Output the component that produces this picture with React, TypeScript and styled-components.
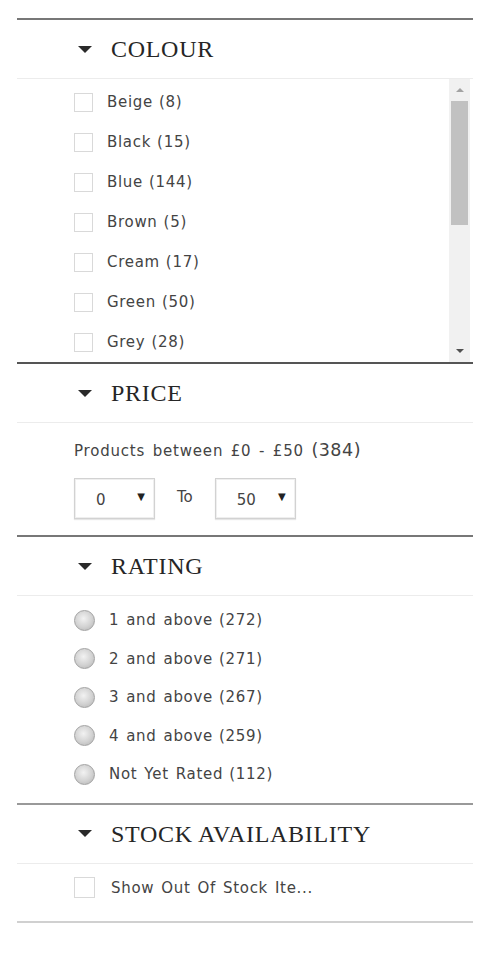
import { createGlobalStyle } from 'styled-components'
import styled from 'styled-components'

const GlobalStyle = createGlobalStyle`
  body {
    margin: 0;
    background: #fff;
    font-family: "DejaVu Sans", "Liberation Sans", sans-serif;
  }
`

const Panel = styled.div({
  width: '456px',
  margin: '18px 0 0 17px',
  borderBottom: '2px solid #d0d0d0'
})

type SectionProps = { $line?: string }
const Section = styled.section<SectionProps>(({ $line }) => ({
  borderTop: `2px solid ${$line ?? '#6a6a6a'}`
}))

const Header = styled.div({
  height: '58px',
  display: 'flex',
  alignItems: 'center',
  paddingLeft: '61px',
  borderBottom: '1px solid #ececec',
  gap: '19px'
})

const Caret = styled.span({
  width: 0,
  height: 0,
  borderLeft: '7px solid transparent',
  borderRight: '7px solid transparent',
  borderTop: '7px solid #2a2a2a'
})

const HeaderTitle = styled.h2({
  margin: 0,
  fontFamily: '"Liberation Serif", "Times New Roman", serif',
  fontWeight: 'normal',
  fontSize: '24px',
  letterSpacing: '0.7px',
  color: '#262626',
  lineHeight: '28px'
})

// --- colour list with its scrollbar

const ScrollBox = styled.div({
  height: '283px',
  display: 'flex'
})

const ListViewport = styled.div({
  flex: 1,
  overflow: 'hidden',
  paddingTop: '3px'
})

const ScrollTrack = styled.div({
  width: '21px',
  marginRight: '3px',
  background: '#f1f1f1',
  display: 'flex',
  flexDirection: 'column',
  alignItems: 'center'
})

const ScrollButton = styled.div({
  height: '22px',
  display: 'flex',
  alignItems: 'center',
  justifyContent: 'center'
})

type ArrowProps = { $up?: boolean }
const ScrollArrow = styled.span<ArrowProps>(({ $up }) => ({
  width: 0,
  height: 0,
  borderLeft: '4px solid transparent',
  borderRight: '4px solid transparent',
  borderBottom: $up ? '4px solid #a3a3a3' : 'none',
  borderTop: $up ? 'none' : '4px solid #505050'
}))

const ScrollThumb = styled.div({
  width: '17px',
  height: '124px',
  background: '#c1c1c1'
})

const ScrollRest = styled.div({
  flex: 1
})

type RowProps = { $gap?: number, $height?: number }
const OptionRow = styled.label<RowProps>(({ $gap, $height }) => ({
  display: 'flex',
  alignItems: 'center',
  gap: `${$gap ?? 14}px`,
  height: `${$height ?? 40}px`,
  paddingLeft: '57px',
  fontSize: '15px',
  letterSpacing: '0.7px',
  wordSpacing: '1.5px',
  color: '#444',
  whiteSpace: 'nowrap'
}))

type BoxProps = { $size?: number }
const CheckBox = styled.span<BoxProps>(({ $size }) => ({
  width: `${$size ?? 19}px`,
  height: `${$size ?? 19}px`,
  boxSizing: 'border-box',
  border: '1px solid #d9d9d9',
  background: '#fff',
  flexShrink: 0
}))

const Count = styled.span({
  marginLeft: '6px'
})

// --- price

const PriceBody = styled.div({
  padding: '17px 0 16px 57px'
})

const PriceText = styled.div({
  fontSize: '15px',
  letterSpacing: '0.8px',
  wordSpacing: '2px',
  color: '#444',
  lineHeight: '20px'
})

const PriceTotal = styled.span({
  fontSize: '17.5px',
  letterSpacing: '0.5px'
})

const PriceRow = styled.div({
  display: 'flex',
  alignItems: 'center',
  gap: '22px',
  marginTop: '17px'
})

const FakeSelect = styled.div({
  width: '81px',
  height: '41px',
  boxSizing: 'border-box',
  border: '1px solid #d2d2d2',
  boxShadow: 'inset 0 0 0 1px #efefef, 0 1px 1px #e6e6e6',
  display: 'flex',
  alignItems: 'center',
  justifyContent: 'space-between',
  padding: '3px 9px 0 21px',
  fontSize: '15px',
  color: '#444'
})

const SelectArrow = styled.span({
  fontSize: '10px',
  color: '#222',
  marginTop: '-8px'
})

const ToLabel = styled.span({
  fontSize: '15px',
  color: '#444',
  marginTop: '-4px'
})

// --- rating

const RatingBody = styled.div({
  padding: '5px 0 9px'
})

const Radio = styled.span({
  width: '21px',
  height: '21px',
  boxSizing: 'border-box',
  borderRadius: '50%',
  border: '1px solid #a2a2a2',
  background: 'radial-gradient(circle at 45% 40%, #f2f2f2 0%, #d2d2d2 55%, #b0b0b0 100%)',
  flexShrink: 0
})

// --- stock

const StockBody = styled.div({
  padding: '4px 0 13px'
})

const colours = [
  ['Beige', 8], ['Black', 15], ['Blue', 144], ['Brown', 5], ['Cream', 17],
  ['Green', 50], ['Grey', 28], ['Multi', 41], ['Navy', 12], ['Orange', 9],
  ['Pink', 22], ['Purple', 7], ['Red', 19], ['White', 30]
] as const

const ratings = [
  ['1 and above', 272], ['2 and above', 271], ['3 and above', 267],
  ['4 and above', 259], ['Not Yet Rated', 112]
] as const

function SectionHeader({ title }: { title: string }) {
  return (<Header>
    <Caret />
    <HeaderTitle>{title}</HeaderTitle>
  </Header>)
}

export default function App() {
  return (<>
    <GlobalStyle />
    <Panel>
      <Section $line="#777">
        <SectionHeader title="COLOUR" />
        <ScrollBox>
          <ListViewport>
            {colours.map(([name, n]) => (<OptionRow key={name}>
              <CheckBox />
              <span>{name}<Count>({n})</Count></span>
            </OptionRow>))}
          </ListViewport>
          <ScrollTrack>
            <ScrollButton><ScrollArrow $up /></ScrollButton>
            <ScrollThumb />
            <ScrollRest />
            <ScrollButton><ScrollArrow /></ScrollButton>
          </ScrollTrack>
        </ScrollBox>
      </Section>

      <Section $line="#555">
        <SectionHeader title="PRICE" />
        <PriceBody>
          <PriceText>Products between £0 - £50 <PriceTotal>(384)</PriceTotal></PriceText>
          <PriceRow>
            <FakeSelect><span>0</span><SelectArrow>▼</SelectArrow></FakeSelect>
            <ToLabel>To</ToLabel>
            <FakeSelect><span>50</span><SelectArrow>▼</SelectArrow></FakeSelect>
          </PriceRow>
        </PriceBody>
      </Section>

      <Section $line="#777">
        <SectionHeader title="RATING" />
        <RatingBody>
          {ratings.map(([label, n]) => (<OptionRow key={label} $gap={14} $height={38.5}>
            <Radio />
            <span>{label}<Count>({n})</Count></span>
          </OptionRow>))}
        </RatingBody>
      </Section>

      <Section $line="#999">
        <SectionHeader title="STOCK AVAILABILITY" />
        <StockBody>
          <OptionRow $gap={16}>
            <CheckBox $size={21} />
            <span>Show Out Of Stock Ite...</span>
          </OptionRow>
        </StockBody>
      </Section>
    </Panel>
  </>)
}
